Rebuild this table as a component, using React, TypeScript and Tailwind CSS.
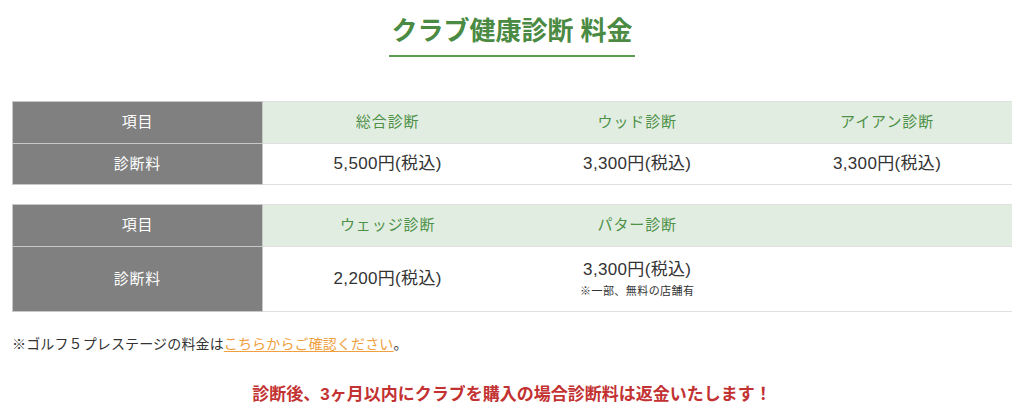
import React from "react";

const font = { fontFamily: '"Liberation Sans", "Noto Sans CJK JP", sans-serif' };

const Table: React.FC<{ heads: string[]; prices: { price: string; note?: string }[]; tall?: boolean }> = ({ heads, prices, tall }) => (
  <table className="w-full table-fixed border-collapse">
    <tbody>
      <tr className="h-[42px]">
        <th className="w-[250px] bg-[#808080] border border-[#c8c8c8] text-white text-[15px] font-normal tracking-[0.05em]">項目</th>
        {heads.map((h, i) => (
          <td key={i} className="bg-[#e2ede2] border-b border-t border-[#e0e0e0] text-[#4e9148] text-[15px] tracking-[0.06em] text-center">
            {h}
          </td>
        ))}
      </tr>
      <tr className={tall ? "h-[65px]" : "h-[41px]"}>
        <th className="bg-[#808080] border border-[#c8c8c8] text-white text-[15px] font-normal tracking-[0.05em]">診断料</th>
        {prices.map((p, i) => (
          <td key={i} className="border-b border-[#e0e0e0] text-[#333] text-center align-middle">
            <div className="text-[17px] tracking-[0.02em] leading-[22px]">{p.price}</div>
            {p.note && <div className="text-[11px] mt-0.5 leading-[16px] tracking-[0.04em]">{p.note}</div>}
          </td>
        ))}
      </tr>
    </tbody>
  </table>
);

const App: React.FC = () => {
  return (
    <div className="w-[1024px] h-[412px] bg-white px-3 overflow-hidden" style={font}>
      {/* Title */}
      <div className="flex justify-center pt-[14px]">
        <h1 className="text-[26px] font-bold text-[#4a8a42] leading-[34px] pb-[7px] border-b-2 border-[#5c9c52] px-0.5">
          クラブ健康診断 料金
        </h1>
      </div>

      <div className="mt-[44px]">
        <Table
          heads={["総合診断", "ウッド診断", "アイアン診断"]}
          prices={[{ price: "5,500円(税込)" }, { price: "3,300円(税込)" }, { price: "3,300円(税込)" }]}
        />
      </div>

      <div className="mt-[19px]">
        <Table
          tall
          heads={["ウェッジ診断", "パター診断", ""]}
          prices={[{ price: "2,200円(税込)" }, { price: "3,300円(税込)", note: "※一部、無料の店舗有" }, { price: "" }]}
        />
      </div>

      <p className="mt-[22px] text-[14px] text-[#333] leading-[20px] tracking-[0.01em]">
        ※ゴルフ５プレステージの料金は
        <a href="#" className="text-[#f0a040] underline underline-offset-2">
          こちらからご確認ください
        </a>
        。
      </p>

      <p className="mt-[29px] text-center text-[17px] font-bold text-[#c33232] leading-[24px]">
        診断後、3ヶ月以内にクラブを購入の場合診断料は返金いたします！
      </p>
    </div>
  );
};

export default App;
